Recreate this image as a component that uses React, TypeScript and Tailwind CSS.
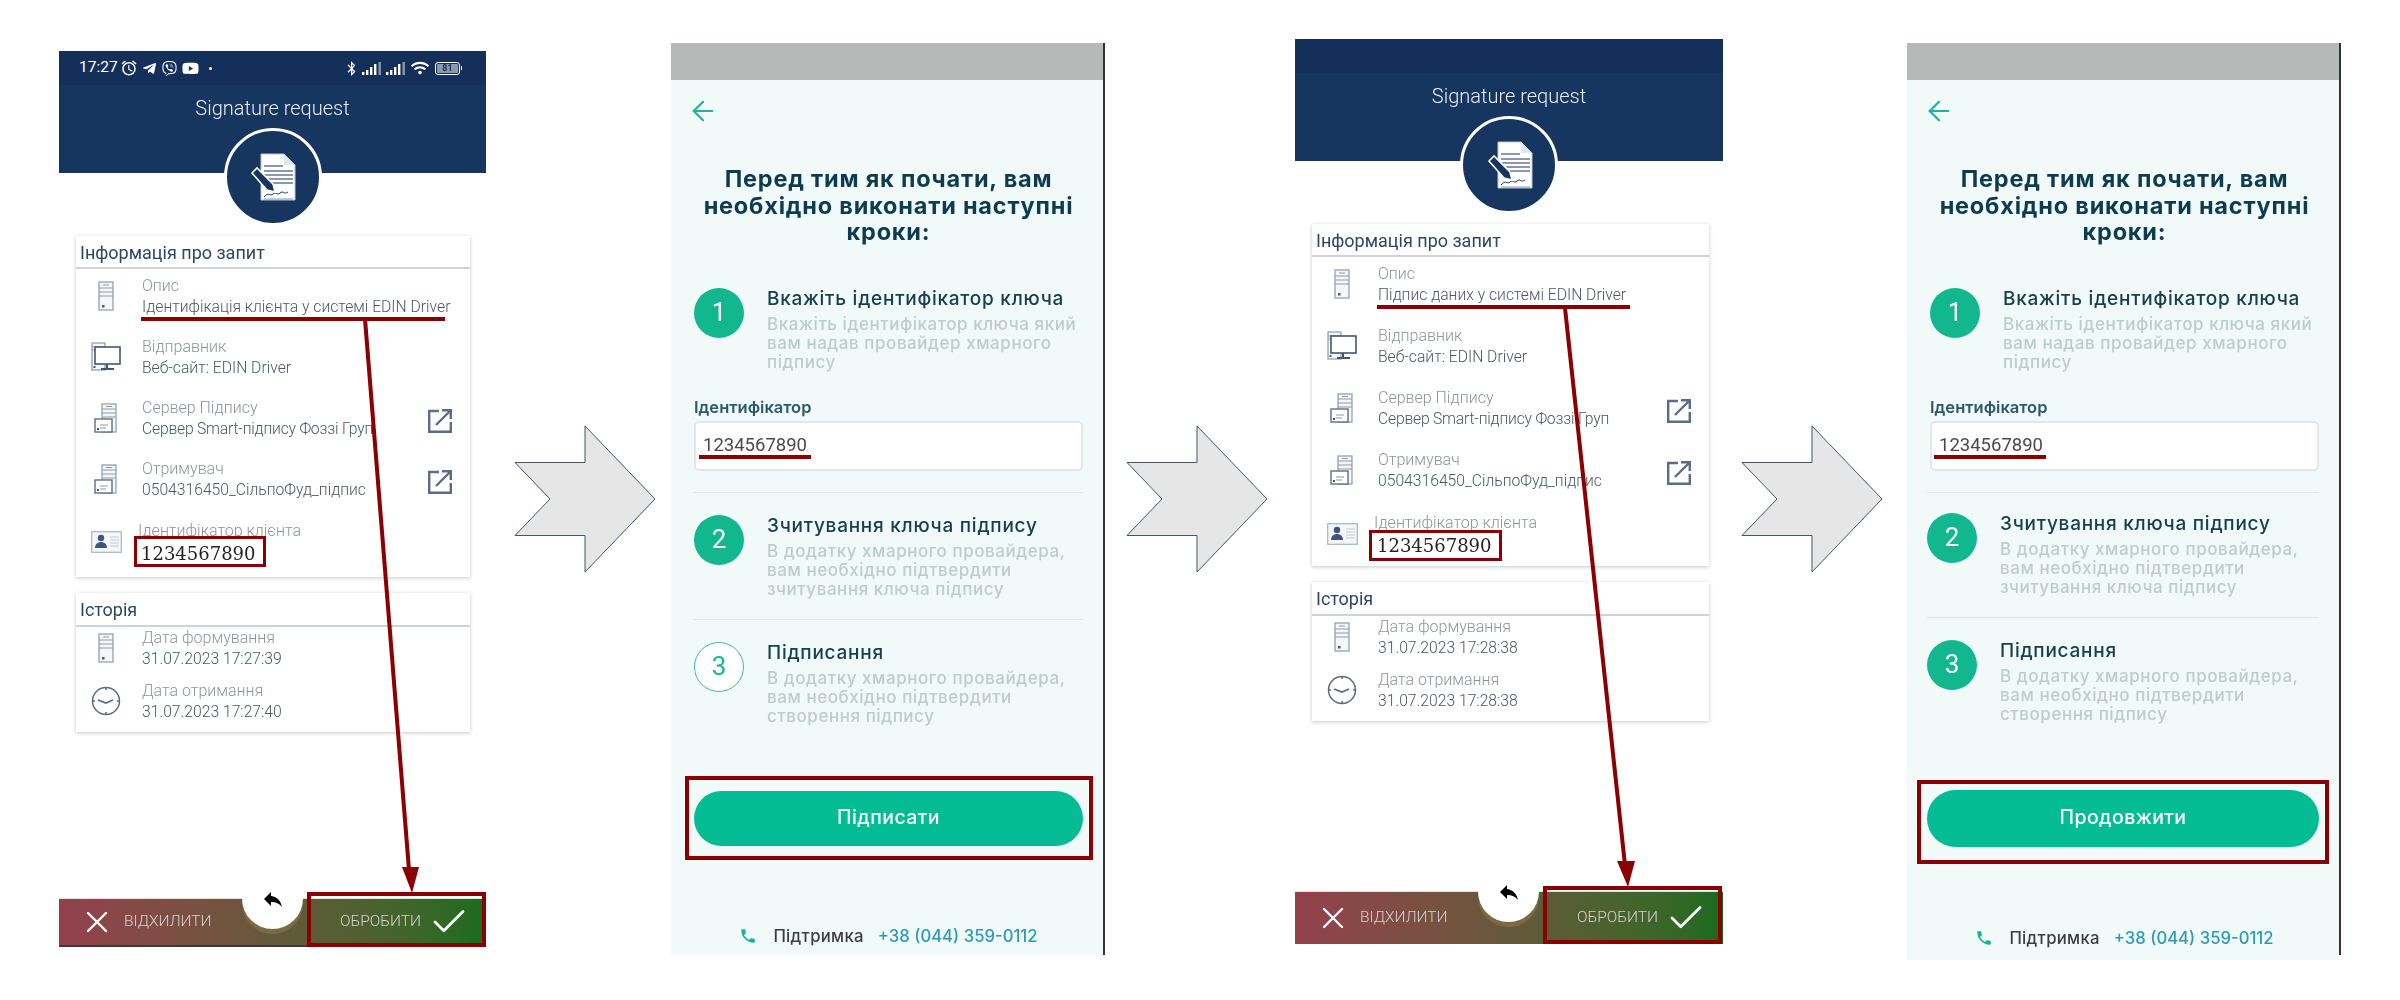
import React from "react";
import { FaTelegramPlane, FaViber, FaYoutube, FaBluetoothB, FaWifi } from "react-icons/fa";
import { MdAccessAlarm, MdReply, MdPhone } from "react-icons/md";
import { ArrowLeft, Check, X } from "lucide-react";

const IC = "#8d99a8";

const Tower = () => (
  <svg width="16" height="30" viewBox="0 0 16 30" fill="none" stroke={IC} strokeWidth="1.2">
    <rect x="1" y="1" width="14" height="28" fill="#f4f6f8" />
    <path d="M1 7h14M1 11h14M1 15h14M5 4h6" />
    <rect x="4" y="24" width="2.5" height="2.5" fill="#4b5a70" stroke="none" />
  </svg>
);

const Monitor = () => (
  <svg width="30" height="30" viewBox="0 0 30 30" fill="none" stroke={IC} strokeWidth="1.2">
    <rect x="1" y="1" width="13" height="27" fill="#f4f6f8" />
    <path d="M1 5h13M1 8h13" />
    <rect x="4" y="5" width="25" height="17" fill="#fff" stroke="#46566e" strokeWidth="1.6" />
    <path d="M16 22v4M10 27h13" stroke="#46566e" strokeWidth="2" />
    <rect x="2.5" y="24" width="2" height="2" fill="#4b5a70" stroke="none" />
  </svg>
);

const ServerWindow = () => (
  <svg width="24" height="30" viewBox="0 0 24 30" fill="none" stroke={IC} strokeWidth="1.2">
    <rect x="8" y="1" width="14" height="28" fill="#f4f6f8" />
    <path d="M8 6h14M8 10h14M8 14h14M12 3.5h6" />
    <rect x="1" y="16" width="17" height="13" fill="#fff" stroke="#5f6f86" strokeWidth="1.4" />
    <path d="M6 22h8M6 25h6" />
    <rect x="3" y="25" width="2" height="2" fill="#4b5a70" stroke="none" />
  </svg>
);

const IdCard = () => (
  <svg width="31" height="22" viewBox="0 0 31 22" fill="none">
    <rect x="0.7" y="0.7" width="29.6" height="20.6" fill="#f4f6f8" stroke="#aab3bf" strokeWidth="1.2" />
    <circle cx="10" cy="7" r="3.2" fill="#3d5680" />
    <path d="M4 17c0-4 3-6 6-6s6 2 6 6z" fill="#3d5680" />
    <path d="M19 6h9M19 9h9M19 12h9M19 15h9" stroke="#c2c9d2" strokeWidth="1.1" />
  </svg>
);

const Clock = () => (
  <svg width="30" height="30" viewBox="0 0 30 30" fill="none" stroke="#5b6b82" strokeWidth="1.5">
    <circle cx="15" cy="15" r="13.5" />
    <path d="M7 14l8 3 7-3" strokeWidth="1.8" />
    <path d="M15 1v3M15 26v3M1 15h3M26 15h3" />
  </svg>
);

const ExternalSquare = () => (
  <svg width="24" height="24" viewBox="0 0 24 24" fill="none" stroke="#5b6b8a" strokeWidth="2.4">
    <path d="M11 2H1.2v20.8H22.8V13" />
    <path d="M8 16L22 2M14 1.2h8.8V10" />
  </svg>
);

const Doc = () => (
  <svg width="47" height="48" viewBox="0 0 47 48" fill="none">
    <path d="M12 1h23l11 11v35H12z" fill="#fff" stroke="#b8c4d4" strokeWidth="1" />
    <path d="M35 1v11h11z" fill="#dfe5ec" />
    <path d="M15 13h19M15 18h29M15 22h29M15 26h29M15 30h29" stroke="#17365f" strokeWidth="1.2" />
    <path d="M15 44c5-6 6 0 9-3s4 2 7-1 4 2 8-1" stroke="#17365f" strokeWidth="1" />
    <path d="M15 46h29" stroke="#8c9bb0" strokeWidth="1" />
    <path d="M3 20l5-5 16 16 2 8-8-2z" fill="#17365f" stroke="#fff" strokeWidth="1.6" />
  </svg>
);

const Signal = () => (
  <svg width="20" height="13" viewBox="0 0 20 13" fill="#fff">
    <rect x="0" y="10" width="2.4" height="3" />
    <rect x="4" y="8" width="2.4" height="5" />
    <rect x="8" y="5" width="2.4" height="8" />
    <rect x="12" y="2" width="2.4" height="11" />
    <rect x="16.5" y="0" width="2.4" height="13" opacity="0.5" />
  </svg>
);

const Battery = () => (
  <div className="flex items-center">
    <div className="w-[25px] h-[13px] border border-white rounded-[3px] flex items-center justify-center p-[1px]">
      <div className="w-full h-full bg-[#8b99ad] rounded-[1px] text-[9px] leading-[9px] text-[#17365f] text-center font-bold">81</div>
    </div>
    <div className="w-[1px] h-[4px] bg-white ml-[1px]" />
  </div>
);

const StatusBar = () => (
  <div className="h-[34px] bg-[#14305a] flex items-center pl-[20px] pr-[24px] text-white">
    <span className="text-[15.5px] leading-none font-['Roboto',sans-serif]">17:27</span>
    <MdAccessAlarm className="ml-[2px]" size={18} />
    <FaTelegramPlane className="ml-[4px]" size={15} />
    <FaViber className="ml-[5px]" size={15} />
    <FaYoutube className="ml-[5px]" size={17} />
    <div className="ml-[10px] w-[3px] h-[3px] rounded-full bg-white" />
    <div className="ml-auto flex items-center">
      <FaBluetoothB size={15} />
      <div className="ml-[3px]"><Signal /></div>
      <div className="ml-[4px]"><Signal /></div>
      <FaWifi className="ml-[5px]" size={18} />
      <div className="ml-[6px]"><Battery /></div>
    </div>
  </div>
);

type Row = { icon: React.ReactNode; label: string; value: string; link?: boolean; tight?: boolean };

const InfoRow = ({ icon, label, value, link, tight }: Row) => (
  <div className="flex h-[42px] items-center">
    <div className="w-[60px] flex justify-center shrink-0">{icon}</div>
    <div className="ml-[6px] text-[15.7px] leading-[21px] font-light whitespace-nowrap">
      <div className="text-[#8f9499] text-[16px]">{label}</div>
      <div className={`text-[#4d5661] ${tight ? "tracking-[-0.2px]" : ""}`}>{value}</div>
    </div>
    {link && <div className="ml-auto mr-[18px] mt-[5px]"><ExternalSquare /></div>}
  </div>
);

const CardHeader = ({ title, h }: { title: string; h: string }) => (
  <div className={`${h} border-b-2 border-[#cfd2d6] pl-[4px] pt-[1px] flex items-center text-[18px] text-[#2f4564] font-normal`}>{title}</div>
);

const RequestPanel = ({
  outer, status, description, d1, d2, rowGap, cardW, topH, histH, bar, bgBottom,
}: {
  outer: string; status: boolean; description: string; d1: string; d2: string; rowGap: string;
  cardW: string; topH: string; histH: string; bar: string; bgBottom: string;
}) => (
  <div className={`${outer} relative flex flex-col shrink-0 font-['Roboto',sans-serif] blur-[0.3px]`}>
    <div className="h-[122px] bg-[#17365f] shrink-0">
      {status ? <StatusBar /> : <div className="h-[34px] bg-[#14305a]" />}
      <div className="text-center text-white/90 font-light text-[20px] leading-[28px] mt-[9px]">Signature request</div>
    </div>
    <div className="absolute left-1/2 -translate-x-1/2 top-[77px] w-[98px] h-[98px] rounded-full bg-[#17365f] border-[3px] border-white flex items-center justify-center">
      <Doc />
    </div>

    <div className={`${cardW} ml-[17px] mt-[63px] bg-white shadow-[0_1px_4px_rgba(0,0,0,0.22)] shrink-0`}>
      <CardHeader title="Інформація про запит" h="h-[33px]" />
      <div className={`pt-[6px] flex flex-col ${rowGap} ${topH}`}>
        <InfoRow icon={<Tower />} label="Опис" value={description} />
        <InfoRow icon={<Monitor />} label="Відправник" value="Веб-сайт: EDIN Driver" />
        <InfoRow icon={<ServerWindow />} label="Сервер Підпису" value="Сервер Smart-підпису Фоззі Груп" link tight />
        <InfoRow icon={<ServerWindow />} label="Отримувач" value="0504316450_СільпоФуд_підпис" link />
        <div className="flex h-[46px] items-center">
          <div className="w-[60px] flex justify-center shrink-0"><IdCard /></div>
          <div className="ml-[2px] text-[16px] leading-[21px] font-light text-[#8f9499] whitespace-nowrap">
            <div>Ідентифікатор клієнта</div>
            <div className="ml-[3px] mt-[2px] text-[18px] leading-[22px] text-[#222] font-['DejaVu_Serif',serif]">1234567890</div>
          </div>
        </div>
      </div>
    </div>

    <div className={`${cardW} ml-[17px] mt-[16px] bg-white shadow-[0_1px_4px_rgba(0,0,0,0.22)] shrink-0`}>
      <CardHeader title="Історія" h="h-[34px]" />
      <div className={`flex flex-col gap-[11px] ${histH}`}>
        <InfoRow icon={<Tower />} label="Дата формування" value={d1} />
        <InfoRow icon={<Clock />} label="Дата отримання" value={d2} />
      </div>
    </div>

    <div className={`mt-auto relative ${bar} ${bgBottom} bg-gradient-to-r from-[#943f4d] via-[#65583a] to-[#166b1f] border-t border-[#e5e2dc] flex items-center text-[#d6d3cc] text-[15.5px] font-light`}>
      <X className="ml-[20px] text-white" size={36} strokeWidth={1.6} />
      <span className="ml-[9px]">ВІДХИЛИТИ</span>
      <span className="ml-auto">ОБРОБИТИ</span>
      <Check className="ml-[7px] mr-[16px] text-white" size={42} strokeWidth={1.6} />
      <div className="absolute left-[183px] -top-[31px] w-[61px] h-[61px] rounded-full bg-white shadow-[0_5px_0_0_#7c6a45] flex items-center justify-center">
        <MdReply size={24} color="#000" />
      </div>
    </div>
  </div>
);

const Step = ({
  n, title, lines, outline, circleShift,
}: { n: number; title: string; lines: string[]; outline?: boolean; circleShift?: boolean }) => (
  <div className={`flex ${circleShift ? "-ml-[3px]" : ""}`}>
    <div className={`w-[50px] h-[50px] rounded-full flex items-center justify-center text-[26px] font-['Roboto',sans-serif] shrink-0 ${outline ? "bg-white border-[1.5px] border-[#40bb9e] text-[#1eb590]" : "bg-[#12b78e] text-white"}`}>{n}</div>
    <div className="ml-[23px]">
      <div className="text-[19px] leading-[22px] font-medium text-[#17404e] tracking-[0.75px] whitespace-nowrap">{title}</div>
      <div className="mt-[5px] text-[17px] leading-[19px] font-medium text-[#bdcccc] tracking-[0.55px] whitespace-nowrap">
        {lines.map((l) => <div key={l}>{l}</div>)}
      </div>
    </div>
  </div>
);

const StepsPanel = ({ outer, cta, done }: { outer: string; cta: string; done?: boolean }) => (
  <div className={`${outer} shrink-0 flex flex-col font-['Inter',sans-serif] blur-[0.25px]`}>
    <div className={`flex flex-col ${done ? "h-[917px]" : "h-[912px]"} bg-[#f2f9f9]`}>
      <div className="h-[37px] bg-[#b5bab9] shrink-0" />
      <div className="pl-[23px] pr-[20px] pt-[15px]">
        <ArrowLeft className="text-[#1cb693] -ml-[7px]" size={32} strokeWidth={1.6} />
        <div className="mt-[39px] text-center text-[23.5px] leading-[26.5px] font-bold text-[#0d3b4f] tracking-[0.8px] whitespace-nowrap">
          <div>Перед тим як почати, вам</div>
          <div>необхідно виконати наступні</div>
          <div>кроки:</div>
        </div>
        <div className="mt-[42px]">
          <Step n={1} title="Вкажіть ідентифікатор ключа" lines={["Вкажіть ідентифікатор ключа який", "вам надав провайдер хмарного", "підпису"]} />
        </div>
        <div className="mt-[25px] text-[16.5px] leading-[20px] font-semibold text-[#2b5a66]">Ідентифікатор</div>
        <div className="mt-[4px] h-[50px] bg-white border-2 border-[#e2e8e8] rounded-[5px] flex items-center pl-[7px] text-[18.5px] text-[#4a4a4a] font-['Roboto',sans-serif]">1234567890</div>
        <div className={`mt-[21px] h-[1px] bg-[#dfe6e6] ${done ? "-ml-[3px]" : ""}`} />
        <div className={done ? "mt-[20px]" : "mt-[22px]"}>
          <Step n={2} circleShift={done} title="Зчитування ключа підпису" lines={["В додатку хмарного провайдера,", "вам необхідно підтвердити", "зчитування ключа підпису"]} />
        </div>
        <div className={`mt-[20px] h-[1px] bg-[#dfe6e6] ${done ? "-ml-[3px]" : ""}`} />
        <div className="mt-[22px]">
          <Step n={3} outline={!done} circleShift={done} title="Підписання" lines={["В додатку хмарного провайдера,", "вам необхідно підтвердити", "створення підпису"]} />
        </div>
        <div className={`${done ? "mt-[66px] h-[57px] -ml-[3px]" : "mt-[65px] h-[55px]"} rounded-full bg-[#04bc93] flex items-center justify-center text-white text-[19.5px] font-medium tracking-[0.4px]`}>{cta}</div>
        <div className={`${done ? "mt-[79px]" : "mt-[78px]"} flex items-center justify-center text-[16.7px] leading-[24px] font-medium`}>
          <MdPhone className="text-[#12b78e]" size={18} />
          <span className="ml-[16px] text-[#3d3d3d] tracking-[0.3px]">Підтримка</span>
          <span className="ml-[14px] text-[#2c9bb4]">+38 (044) 359-0112</span>
        </div>
      </div>
    </div>
  </div>
);

const BigArrow = ({ cls }: { cls: string }) => (
  <svg className={`${cls} shrink-0`} width="142" height="148" viewBox="0 0 142 148">
    <path d="M1 37.5H71V1L141 74L71 147V110.5H1L36 74Z" fill="#e6e6e6" stroke="#44546a" strokeWidth="1" />
  </svg>
);

const RED = "#8b0000";

export default function App() {
  return (
    <div className="relative w-[2400px] h-[1000px] bg-white overflow-hidden flex items-start">
      <RequestPanel
        outer="ml-[59px] mt-[51px] w-[427px] h-[896px]"
        status
        description="Ідентифікація клієнта у системі EDIN Driver"
        d1="31.07.2023 17:27:39"
        d2="31.07.2023 17:27:40"
        rowGap="gap-[19px]"
        cardW="w-[394px]"
        topH="h-[308px]"
        histH="pb-[10px]"
        bar="h-[49px]"
        bgBottom="border-b-2 border-b-[#3a3a3a]"
      />
      <BigArrow cls="ml-[28px] mt-[425px]" />
      <div className="w-[16px] shrink-0 -ml-[1px]" />
      <div className="relative shrink-0 mt-[43px] h-[912px] w-[434px] border-r-2 border-[#333]">
        <StepsPanel outer="w-[432px]" cta="Підписати" />
      </div>
      <BigArrow cls="ml-[21px] mt-[425px]" />
      <RequestPanel
        outer="ml-[27px] mt-[39px] w-[428px] h-[905px]"
        status={false}
        description="Підпис даних у системі EDIN Driver"
        d1="31.07.2023 17:28:38"
        d2="31.07.2023 17:28:38"
        rowGap="gap-[20px]"
        cardW="w-[397px]"
        topH="h-[309px]"
        histH="pb-[10px]"
        bar="h-[53px]"
        bgBottom=""
      />
      <BigArrow cls="ml-[18px] mt-[425px]" />
      <div className="relative shrink-0 ml-[24px] mt-[43px] h-[912px] w-[434px] border-r-2 border-[#333]">
        <StepsPanel outer="w-[432px]" cta="Продовжити" done />
      </div>

      {/* annotations */}
      <div className="absolute left-[141px] top-[317px] w-[304px] h-[4px] bg-[#8b0000]" />
      <div className="absolute left-[134px] top-[536px] w-[132px] h-[31px] border-[3px] border-[#8b0000]" />
      <div className="absolute left-[307px] top-[892px] w-[179px] h-[55px] border-4 border-[#8b0000]" />
      <div className="absolute left-[699px] top-[455px] w-[112px] h-[4px] bg-[#8b0000]" />
      <div className="absolute left-[685px] top-[776px] w-[408px] h-[84px] border-4 border-[#8b0000]" />
      <div className="absolute left-[1377px] top-[305px] w-[253px] h-[4px] bg-[#8b0000]" />
      <div className="absolute left-[1369px] top-[530px] w-[133px] h-[31px] border-[3px] border-[#8b0000]" />
      <div className="absolute left-[1543px] top-[886px] w-[179px] h-[58px] border-4 border-[#8b0000]" />
      <div className="absolute left-[1934px] top-[455px] w-[112px] h-[4px] bg-[#8b0000]" />
      <div className="absolute left-[1917px] top-[780px] w-[412px] h-[84px] border-4 border-[#8b0000]" />

      <svg className="absolute left-0 top-0 pointer-events-none" width="2400" height="1000" viewBox="0 0 2400 1000">
        <path d="M365 319L409 870" stroke={RED} strokeWidth="4" fill="none" />
        <path d="M402 867H419L412 893Z" fill={RED} />
        <path d="M1565 308L1625 865" stroke={RED} strokeWidth="4" fill="none" />
        <path d="M1617 861H1635L1628 887Z" fill={RED} />
      </svg>
    </div>
  );
}
